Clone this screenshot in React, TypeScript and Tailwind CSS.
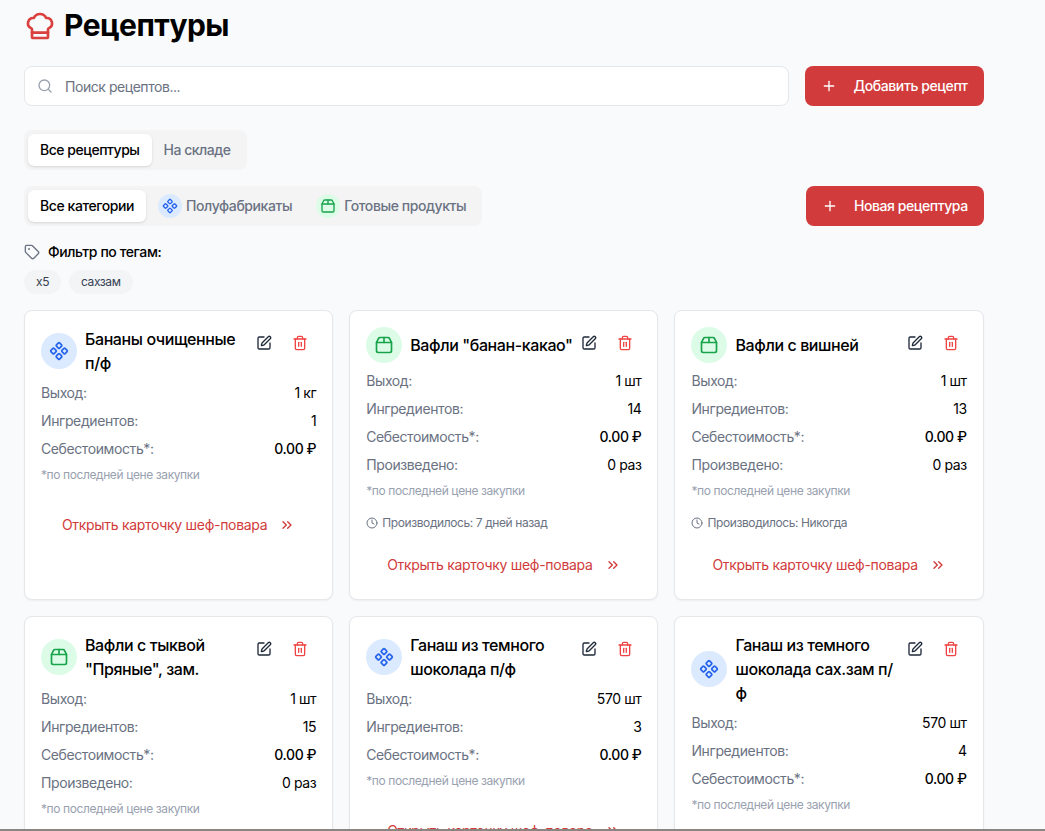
import React from 'react';
import { ChefHat, ChevronsRight, Clock, Component, Package2, Plus, Search, SquarePen, Tag, Trash2 } from 'lucide-react';

interface Recipe {
  name: string;
  kind: 'semi' | 'ready';
  output: string;
  ingredients: number;
  produced?: string;
  lastMade?: string;
}

const recipes: Recipe[] = [
  { name: 'Бананы очищенные п/ф', kind: 'semi', output: '1 кг', ingredients: 1 },
  { name: 'Вафли "банан-какао"', kind: 'ready', output: '1 шт', ingredients: 14, produced: '0 раз', lastMade: '7 дней назад' },
  { name: 'Вафли с вишней', kind: 'ready', output: '1 шт', ingredients: 13, produced: '0 раз', lastMade: 'Никогда' },
  { name: 'Вафли с тыквой "Пряные", зам.', kind: 'ready', output: '1 шт', ingredients: 15, produced: '0 раз', lastMade: '7 дней назад' },
  { name: 'Ганаш из темного шоколада п/ф', kind: 'semi', output: '570 шт', ingredients: 3 },
  { name: 'Ганаш из темного шоколада сах.зам п/ф', kind: 'semi', output: '570 шт', ingredients: 4 },
];

const Row: React.FC<{ label: string; value: React.ReactNode; strong?: boolean }> = ({ label, value, strong }) => (
  <div className="flex justify-between items-center h-5 mb-2 text-sm">
    <span className="text-gray-500">{label}</span>
    <span className={strong ? 'font-medium text-black' : 'text-black'}>{value}</span>
  </div>
);

const RecipeCard: React.FC<{ recipe: Recipe }> = ({ recipe }) => (
  <div className="flex flex-col bg-white border border-gray-200 rounded-lg shadow-[0_1px_2px_rgba(0,0,0,0.05)] p-4">
    <div className="flex items-start justify-between mb-2">
      <div className="flex items-center gap-2 flex-1 min-w-0">
        {recipe.kind === 'semi' ? (
          <div className="w-9 h-9 shrink-0 rounded-full bg-[#dbeafe] flex items-center justify-center">
            <Component className="w-5 h-5 text-[#2563eb]" />
          </div>
        ) : (
          <div className="w-9 h-9 shrink-0 rounded-full bg-[#dcfce7] flex items-center justify-center">
            <Package2 className="w-5 h-5 text-[#16a34a]" />
          </div>
        )}
        <h3 className="text-base leading-6 font-medium text-black">{recipe.name}</h3>
      </div>
      <div className="flex gap-1 shrink-0">
        <button className="p-2 text-gray-800"><SquarePen className="w-4 h-4" /></button>
        <button className="p-2 text-[#ef4444]"><Trash2 className="w-4 h-4" /></button>
      </div>
    </div>
    <Row label="Выход:" value={recipe.output} />
    <Row label="Ингредиентов:" value={recipe.ingredients} />
    <Row label="Себестоимость*:" value="0.00 ₽" strong />
    {recipe.produced && <Row label="Произведено:" value={recipe.produced} />}
    <p className="text-xs text-gray-400 mb-2">*по последней цене закупки</p>
    {recipe.lastMade && (
      <div className="flex items-center gap-1 text-xs text-gray-500 mt-2">
        <Clock className="w-3 h-3" />
        <span>Производилось: {recipe.lastMade}</span>
      </div>
    )}
    <button className="w-full h-9 mt-4 flex items-center justify-center gap-3 text-sm tracking-[-0.3px] text-[#d13b3b]">
      Открыть карточку шеф-повара
      <ChevronsRight className="w-4 h-4" />
    </button>
  </div>
);

export default function App() {
  return (
    <div className="relative h-[831px] overflow-hidden bg-[#f9fafb] pl-6 pr-[61.3px] pt-2 font-['Inter',sans-serif] tracking-[-0.4px]">
      <div className="flex items-center gap-2 mb-[22px]">
        <ChefHat className="w-8 h-8 text-[#d9403f]" />
        <h1 className="text-3xl font-bold tracking-[-0.55px] text-black -translate-y-px">Рецептуры</h1>
      </div>

      <div className="flex gap-4 mb-6">
        <div className="flex-1 h-10 bg-white border border-gray-200 rounded-lg flex items-center gap-3 px-3">
          <Search className="w-4 h-4 text-gray-400" />
          <span className="text-sm text-gray-500 pt-px tracking-[-0.45px]">Поиск рецептов...</span>
        </div>
        <button className="h-10 flex items-center gap-4 px-4 rounded-lg bg-[#d13b3b] text-white text-sm font-medium">
          <Plus className="w-4 h-4" />
          Добавить рецепт
        </button>
      </div>

      <div className="inline-flex p-1 rounded-lg bg-zinc-100 mb-4 align-top text-sm font-medium tracking-[-0.47px]">
        <button className="h-8 px-3 rounded-md bg-white shadow-sm text-black">Все рецептуры</button>
        <button className="h-8 px-3 rounded-md text-gray-500">На складе</button>
      </div>

      <div className="flex items-center justify-between mb-4">
        <div className="flex p-1 rounded-lg bg-zinc-100 text-sm font-medium tracking-[-0.42px]">
          <button className="h-8 px-3 rounded-md bg-white shadow-sm text-black">Все категории</button>
          <button className="h-8 px-3 flex items-center gap-1 text-gray-500">
            <span className="w-6 h-6 rounded-full bg-[#dbeafe] flex items-center justify-center">
              <Component className="w-4 h-4 text-[#2563eb]" />
            </span>
            Полуфабрикаты
          </button>
          <button className="h-8 px-3 flex items-center gap-1 text-gray-500">
            <span className="w-6 h-6 rounded-full bg-[#dcfce7] flex items-center justify-center">
              <Package2 className="w-4 h-4 text-[#16a34a]" />
            </span>
            Готовые продукты
          </button>
        </div>
        <button className="h-10 flex items-center gap-4 px-4 rounded-lg bg-[#d13b3b] text-white text-sm font-medium tracking-[-0.43px]">
          <Plus className="w-4 h-4" />
          Новая рецептура
        </button>
      </div>

      <div className="flex items-center gap-2 mb-2 text-sm font-medium text-black">
        <Tag className="w-4 h-4 text-gray-500" />
        Фильтр по тегам:
      </div>
      <div className="flex gap-2 mb-4">
        <span className="h-6 px-3 flex items-center rounded-full bg-gray-100 text-xs text-gray-700">x5</span>
        <span className="h-6 px-3 flex items-center rounded-full bg-gray-100 text-xs text-gray-700">сахзам</span>
      </div>

      <div className="grid grid-cols-3 gap-4">
        {recipes.map(recipe => (
          <RecipeCard key={recipe.name} recipe={recipe} />
        ))}
      </div>

      <div className="absolute left-0 right-0 bottom-0 h-0.5 bg-[#8a8580]" />
    </div>
  );
}
